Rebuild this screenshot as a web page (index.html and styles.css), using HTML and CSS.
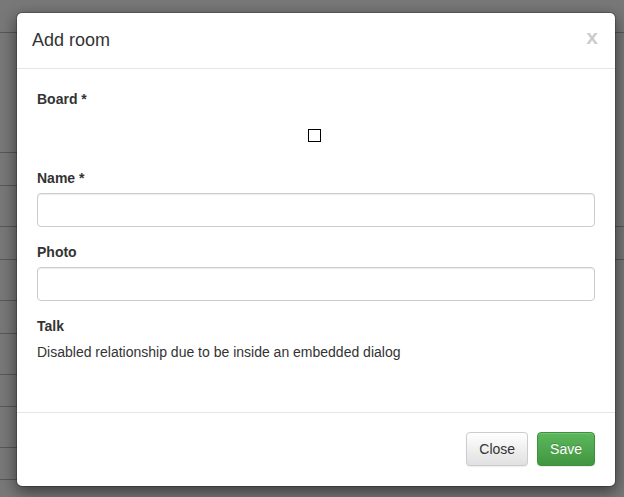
FILE: index.html
```html
<!DOCTYPE html>
<html>
<head>
<meta charset="utf-8">
<link rel="stylesheet" href="styles.css">
</head>
<body>
<div class="page">
  <div class="row r1"><div class="cell-l line"></div><div class="cell-r line"></div></div>
  <div class="row r2"><div class="cell-l line"></div><div class="cell-r"></div></div>
  <div class="row r3"><div class="cell-l line"></div><div class="cell-r"></div></div>
  <div class="row r4"><div class="cell-l line"></div><div class="cell-r line"></div></div>
  <div class="row r3"><div class="cell-l line"></div><div class="cell-r line"></div></div>
  <div class="row r4"><div class="cell-l line"></div><div class="cell-r"></div></div>
  <div class="row r3"><div class="cell-l line"></div><div class="cell-r"></div></div>
  <div class="row r4"><div class="cell-l line"></div><div class="cell-r"></div></div>
  <div class="row r5"><div class="cell-l line"></div><div class="cell-r"></div></div>
  <div class="row r4"><div class="cell-l line"></div><div class="cell-r"></div></div>
  <div class="row r5"><div class="cell-l line"></div><div class="cell-r"></div></div>
</div>

<div class="modal">
  <div class="modal-header">
    <span class="close">x</span>
    <h4 class="modal-title">Add room</h4>
  </div>
  <div class="modal-body">
    <div class="form-group">
      <label>Board *</label>
      <div class="check-area"><span class="checkbox"></span></div>
    </div>
    <div class="form-group">
      <label>Name *</label>
      <div class="form-control"></div>
    </div>
    <div class="form-group">
      <label>Photo</label>
      <div class="form-control"></div>
    </div>
    <div class="form-group">
      <label>Talk</label>
      <div class="help">Disabled relationship due to be inside an embedded dialog</div>
    </div>
  </div>
  <div class="modal-footer">
    <button class="btn btn-default">Close</button>
    <button class="btn btn-success">Save</button>
  </div>
</div>
</body>
</html>
```

FILE: styles.css
```css
html, body {
  margin: 0;
  padding: 0;
}
body {
  background: #787878;
  font-family: "Liberation Sans", Arial, sans-serif;
  font-size: 14px;
  line-height: 20px;
  color: #333;
  height: 497px;
  overflow: hidden;
}
.page {
  display: flex;
  flex-direction: column;
}
.row {
  display: flex;
}
.cell-l {
  width: 300px;
  box-sizing: border-box;
}
.cell-r {
  flex: 1;
  box-sizing: border-box;
}
.line {
  border-bottom: 1px solid #575757;
}
.r1 > div { height: 33px; }
.r2 > div { height: 120px; }
.r3 > div { height: 33px; }
.r4 > div { height: 41px; }
.r5 > div { height: 32px; }

.modal {
  position: absolute;
  left: 16px;
  top: 12px;
  width: 598px;
  background: #fff;
  border: 1px solid rgba(0,0,0,0.2);
  border-radius: 6px;
  box-shadow: 0 5px 15px rgba(0,0,0,0.5);
  background-clip: padding-box;
}
.modal-header {
  padding: 15px;
  border-bottom: 1px solid #e5e5e5;
  min-height: 16px;
}
.modal-title {
  margin: 0;
  font-size: 18px;
  font-weight: 500;
  line-height: 25px;
  color: #333;
}
.close {
  float: right;
  font-size: 21px;
  font-weight: bold;
  line-height: 1;
  color: #000;
  opacity: 0.2;
  text-shadow: 0 1px 0 #fff;
  margin-right: 2px;
  margin-top: -2px;
}
.modal-body {
  padding: 20px;
}
.form-group {
  margin-bottom: 15px;
}
label {
  display: inline-block;
  margin-bottom: 5px;
  font-weight: bold;
}
.check-area {
  height: 39px;
  display: flex;
  justify-content: center;
  align-items: flex-start;
}
.checkbox {
  display: block;
  width: 11px;
  height: 11px;
  border: 1px solid #000;
  margin-top: 15px;
  margin-right: 3px;
}
.form-control {
  height: 34px;
  box-sizing: border-box;
  border: 1px solid #ccc;
  border-radius: 4px;
  background: #fff;
  box-shadow: inset 0 1px 1px rgba(0,0,0,0.075);
}
.help {
  line-height: 20px;
  margin-top: 1px;
}
.modal-footer {
  margin-top: 15px;
  padding: 19px 20px 20px;
  border-top: 1px solid #e5e5e5;
  display: flex;
  justify-content: flex-end;
  gap: 9px;
}
.btn {
  font-family: "Liberation Sans", Arial, sans-serif;
  font-size: 14px;
  line-height: 20px;
  padding: 6px 12px;
  border-radius: 4px;
  border: 1px solid transparent;
  margin: 0;
  height: 34px;
  box-sizing: border-box;
  cursor: pointer;
}
.btn-default {
  color: #333;
  background-image: linear-gradient(to bottom, #fff 0%, #e0e0e0 100%);
  border-color: #ccc;
  box-shadow: inset 0 1px 0 rgba(255,255,255,0.15), 0 1px 1px rgba(0,0,0,0.075);
}
.btn-success {
  color: #fff;
  background-image: linear-gradient(to bottom, #5cb85c 0%, #419641 100%);
  border-color: #3e8f3e;
  text-shadow: 0 -1px 0 rgba(0,0,0,0.2);
  box-shadow: inset 0 1px 0 rgba(255,255,255,0.15), 0 1px 1px rgba(0,0,0,0.075);
}
```
